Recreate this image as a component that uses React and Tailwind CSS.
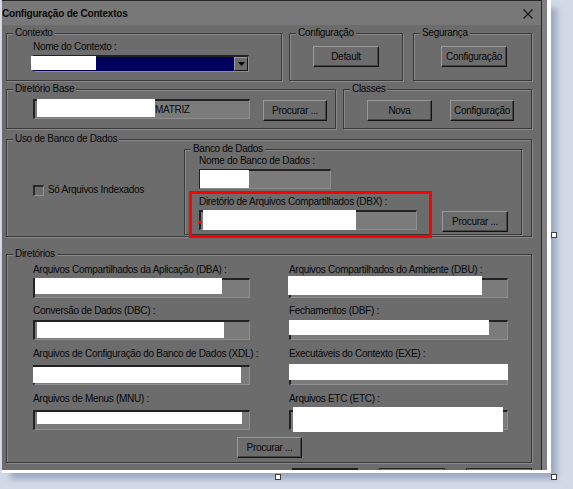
import React from 'react'

// dimmed classic-Windows palette
const FACE = 'bg-[#6c6c6c]'

function Group({ label, className = '', children }) {
  return (
    <fieldset className={`shrink-0 border border-[#3a3a3a] shadow-[inset_1px_1px_0_#888888,1px_1px_0_#888888] ${className}`}>
      <legend className={`ml-[6px] px-[2px] h-[12px] leading-[12px] ${FACE}`}>{label}</legend>
      {children}
    </fieldset>
  )
}

function Button({ className = '', children }) {
  return (
    <button
      type="button"
      className={`h-[21px] shrink-0 flex items-center justify-center border border-t-[#989898] border-l-[#989898] border-b-[#121212] border-r-[#121212] shadow-[inset_-1px_-1px_0_#474747] ${className}`}
    >
      {children}
    </button>
  )
}

function Field({ className = '', redact = '', children }) {
  return (
    <div
      className={`relative h-[20px] shrink-0 flex items-center bg-[#7b7b7b] border-t-2 border-l-2 border-r border-b border-t-[#222222] border-l-[#222222] border-r-[#8e8e8e] border-b-[#8e8e8e] ${className}`}
    >
      {children}
      {redact && <div className={`absolute bg-white ${redact}`} />}
    </div>
  )
}

function Combo({ className = '' }) {
  return (
    <div
      className={`relative w-[216px] h-[17px] flex bg-[#00005e] border-t-2 border-l-2 border-r border-b border-t-[#222222] border-l-[#222222] border-r-[#8e8e8e] border-b-[#8e8e8e] ${className}`}
    >
      <div className="flex-1" />
      <div className={`w-[14px] h-full flex items-center justify-center ${FACE} border border-t-[#989898] border-l-[#989898] border-b-[#121212] border-r-[#121212]`}>
        <svg width="7" height="4" viewBox="0 0 7 4">
          <path d="M0 0h7L3.5 4z" fill="#000" />
        </svg>
      </div>
      <div className="absolute left-[-4px] top-[-1px] w-[65px] h-[14px] bg-white" />
    </div>
  )
}

function DirRow({ className = '', gap, left, right }) {
  return (
    <div className={`grid grid-cols-[217px_219px] gap-x-[39px] ${className}`}>
      <div>{left.label}</div>
      <div>{right.label}</div>
      <Field className={`w-[217px] ${gap}`} redact={left.redact} />
      <Field className={`w-[219px] ${gap}`} redact={right.redact} />
    </div>
  )
}

function Dialog() {
  return (
    <div className={`w-[540px] h-[470px] shrink-0 flex flex-col overflow-hidden ${FACE} border-t border-r border-[#262626]`}>
      <div className="h-[24px] shrink-0 flex items-center justify-between bg-[#787878] pt-[1px] pr-[8px]">
        <span className="font-bold tracking-[-0.2px]">Configuração de Contextos</span>
        <svg width="10" height="10" viewBox="0 0 10 10">
          <path d="M0.5 0.5l9 9M9.5 0.5l-9 9" stroke="#111" strokeWidth="1.1" />
        </svg>
      </div>

      <div className="flex flex-col pl-[4px] pt-[2px]">
        <div className="flex">
          <Group label="Contexto" className="w-[276px] h-[54px]">
            <div className="pl-[26px] pt-[2px]">
              <div>Nome do Contexto :</div>
              <Combo className="mt-[2px]" />
            </div>
          </Group>
          <Group label="Configuração" className="ml-[7px] w-[114px] h-[54px]">
            <div className="flex pl-[23px] pt-[7px]">
              <Button className="w-[66px]">Default</Button>
            </div>
          </Group>
          <Group label="Segurança" className="ml-[10px] w-[119px] h-[54px]">
            <div className="flex pl-[27px] pt-[7px]">
              <Button className="w-[66px]">Configuração</Button>
            </div>
          </Group>
        </div>

        <div className="flex mt-[2px]">
          <Group label="Diretório Base" className="w-[330px] h-[46px]">
            <div className="flex items-start pl-[26px] pt-[4px]">
              <Field className="w-[217px] h-[19px]" redact="left-[2px] top-[-2px] w-[118px] h-[18px]">
                <span className="ml-[120px]">MATRIZ</span>
              </Field>
              <Button className="ml-[13px] mt-[1px] w-[64px]">Procurar ...</Button>
            </div>
          </Group>
          <Group label="Classes" className="ml-[7px] w-[189px] h-[46px]">
            <div className="flex pl-[23px] pt-[5px]">
              <Button className="w-[65px]">Nova</Button>
              <Button className="ml-[18px] w-[64px]">Configuração</Button>
            </div>
          </Group>
        </div>

        <Group label="Uso de Banco de Dados" className="mt-[4px] w-[526px] h-[104px]">
          <div className="flex">
            <div className="w-[177px] shrink-0 flex items-center pl-[26px]">
              <div className="w-[11px] h-[11px] bg-[#6c6c6c] border-t-2 border-l-2 border-r border-b border-t-[#2a2a2a] border-l-[#2a2a2a] border-r-[#909090] border-b-[#909090]" />
              <span className="ml-[4px]">Só Arquivos Indexados</span>
            </div>
            <Group label="Banco de Dados" className="-mt-[2px] w-[338px] h-[92px]">
              <div className="relative pl-[14px]">
                <div>Nome do Banco de Dados :</div>
                <Field className="mt-[2px] w-[132px] h-[19px]" redact="left-[-1px] top-[-1px] w-[49px] h-[18px]">
                  <span className="absolute left-[-1px] top-[7px] w-[3px] h-[2px] bg-[#ff1010]" />
                </Field>
                <div className="mt-[7px]">Diretório de Arquivos Compartilhados (DBX) :</div>
                <div className="flex items-start mt-[2px]">
                  <Field className="w-[218px]" redact="left-[2px] top-[-2px] w-[153px] h-[20px]">
                    <span className="absolute left-[-3px] top-[9px] w-[4px] h-[2px] bg-[#ff1010]" />
                  </Field>
                  <Button className="ml-[25px] mt-[1px] w-[66px]">Procurar ...</Button>
                </div>
                <div className="absolute left-[4px] top-[36px] w-[243px] h-[47px] border-[3px] border-[#ff0000]" />
              </div>
            </Group>
          </div>
        </Group>

        <Group label="Diretórios" className="mt-[11px] w-[526px] h-[215px]">
          <div className="pl-[26px] pt-[4px]">
            <DirRow
              gap="mt-[2px]"
              left={{ label: 'Arquivos Compartilhados da Aplicação (DBA) :', redact: 'left-[0px] top-[-2px] w-[187px] h-[16px]' }}
              right={{ label: 'Arquivos Compartilhados do Ambiente (DBU) :', redact: 'left-[-3px] top-[-4px] w-[194px] h-[19px]' }}
            />
            <DirRow
              className="mt-[7px]"
              gap="mt-[3px]"
              left={{ label: 'Conversão de Dados (DBC) :', redact: 'left-[2px] top-[0px] w-[187px] h-[16px]' }}
              right={{ label: 'Fechamentos (DBF) :', redact: 'left-[-2px] top-[-2px] w-[200px] h-[15px]' }}
            />
            <DirRow
              className="mt-[8px]"
              gap="mt-[5px]"
              left={{ label: 'Arquivos de Configuração do Banco de Dados (XDL) :', redact: 'left-[-2px] top-[0px] w-[208px] h-[16px]' }}
              right={{ label: 'Executáveis do Contexto (EXE) :', redact: 'left-[-2px] top-[-3px] w-[219px] h-[16px]' }}
            />
            <DirRow
              className="mt-[8px]"
              gap="mt-[5px]"
              left={{ label: 'Arquivos de Menus (MNU) :', redact: 'left-[2px] top-[0px] w-[205px] h-[12px]' }}
              right={{ label: 'Arquivos ETC (ETC) :', redact: 'left-[2px] top-[-5px] w-[210px] h-[25px]' }}
            />
            <div className="flex pl-[204px] mt-[7px]">
              <Button className="w-[65px] h-[20px]">Procurar ...</Button>
            </div>
          </div>
        </Group>

        {/* bottom button row, cut off by the frame */}
        <div className="flex pl-[286px] mt-[5px]">
          <div className="w-[66px] h-[21px] border-2 border-[#1e1e1e]" />
          <div className="ml-[21px] w-[66px] h-[21px] border border-t-[#2a2a2a] border-l-[#2a2a2a] border-r-[#2a2a2a]" />
          <div className="ml-[21px] w-[66px] h-[21px] border border-t-[#2a2a2a] border-l-[#2a2a2a] border-r-[#2a2a2a]" />
        </div>
      </div>
    </div>
  )
}

function Handle({ className = '' }) {
  return <div className={`absolute w-[6px] h-[6px] bg-white border border-[#404040] ${className}`} />
}

export default function App() {
  return (
    <div className="relative w-[573px] h-[489px] overflow-hidden whitespace-nowrap bg-[#d2dae7] pl-[2px] font-['Liberation_Sans',Arial,sans-serif] text-[10px] leading-[12px] tracking-[-0.3px] text-[#080808]">
      <div className="w-[549px] h-[473px] flex flex-col shadow-[7px_7px_6px_-1px_rgba(90,110,150,0.45)]">
        <div className="flex h-[470px]">
          <Dialog />
          <div className="w-[5px] bg-[#808080]" />
          <div className="w-[4px] bg-white" />
        </div>
        <div className="h-[3px] bg-white" />
      </div>
      <Handle className="left-[275px] top-[474px]" />
      <Handle className="left-[551px] top-[474px]" />
      <Handle className="left-[551px] top-[232px]" />
    </div>
  )
}
